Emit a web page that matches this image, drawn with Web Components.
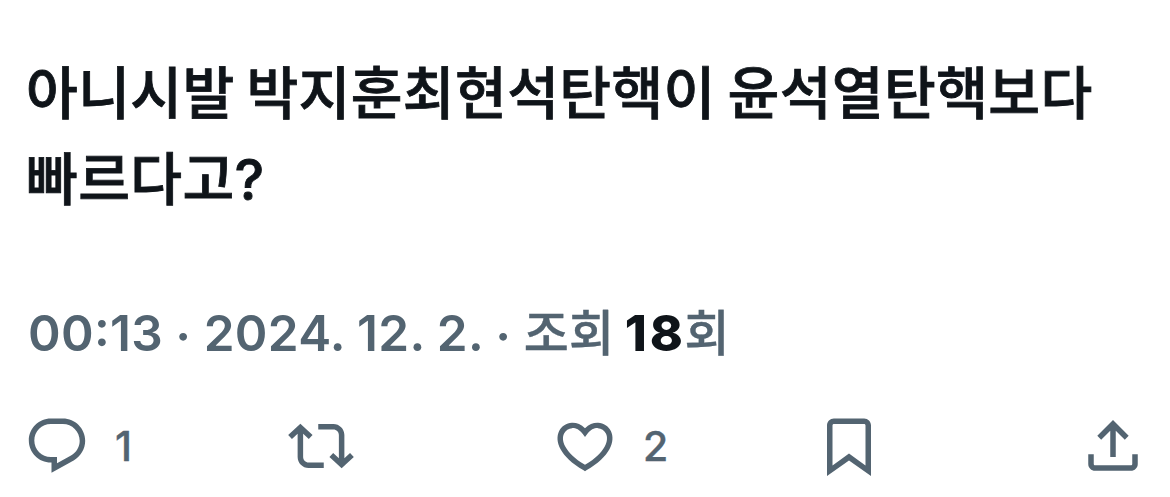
<!DOCTYPE html>
<html lang="ko">
<head>
<meta charset="utf-8">
<title>Post</title>
<style>
  body {
    margin: 0;
    background: #fff;
    font-family: Inter, "Noto Sans CJK KR", sans-serif;
  }
</style>
</head>
<body>
<post-detail>
  <post-text slot="text"><span>아니시발 박지훈최현석탄핵이 윤석열탄핵보다</span><span slot="next">빠르다고?</span></post-text>
  <post-meta slot="meta" views="18"><span slot="time">00:13</span><span slot="date">2024. 12. 2.</span></post-meta>
  <post-action slot="actions" icon="reply" count="1"></post-action>
  <post-action slot="actions" icon="repost"></post-action>
  <post-action slot="actions" icon="like" count="2"></post-action>
  <post-action slot="actions" icon="bookmark"></post-action>
  <post-action slot="actions" icon="share"></post-action>
</post-detail>
<script>
const icons = {
  reply: 'M1.751 10c0-4.42 3.584-8 8.005-8h4.366c4.49 0 8.129 3.64 8.129 8.13 0 2.96-1.607 5.68-4.196 7.11l-8.054 4.46v-3.69h-.067c-4.49.1-8.183-3.51-8.183-8.01zm8.005-6c-3.317 0-6.005 2.69-6.005 6 0 3.37 2.77 6.08 6.138 6.01l.351-.01h1.761v2.3l5.087-2.81c1.951-1.08 3.163-3.13 3.163-5.36 0-3.39-2.744-6.13-6.129-6.13H9.756z',
  repost: 'M4.5 3.88l4.432 4.14-1.364 1.46L5.5 7.55V16c0 1.1.896 2 2 2H13v2H7.5c-2.209 0-4-1.79-4-4V7.55L1.432 9.48.068 8.02 4.5 3.88zM16.5 6H11V4h5.5c2.209 0 4 1.79 4 4v8.45l2.068-1.93 1.364 1.46-4.432 4.14-4.432-4.14 1.364-1.46 2.068 1.93V8c0-1.1-.896-2-2-2z',
  like: 'M16.697 5.5c-1.222-.06-2.679.51-3.89 2.16l-.805 1.09-.806-1.09C9.984 6.01 8.526 5.44 7.304 5.5c-1.243.07-2.349.78-2.91 1.91-.552 1.12-.633 2.78.479 4.82 1.074 1.97 3.257 4.27 7.129 6.61 3.87-2.34 6.052-4.64 7.126-6.61 1.111-2.04 1.03-3.7.477-4.82-.561-1.13-1.666-1.84-2.908-1.91zm4.187 7.69c-1.351 2.48-4.001 5.12-8.379 7.67l-.503.3-.504-.3c-4.379-2.55-7.029-5.19-8.382-7.67-1.36-2.5-1.41-4.86-.514-6.67.887-1.79 2.647-2.91 4.601-3.01 1.651-.09 3.368.56 4.798 2.01 1.429-1.45 3.146-2.1 4.796-2.01 1.954.1 3.714 1.22 4.601 3.01.896 1.81.846 4.17-.514 6.67z',
  bookmark: 'M4 4.5C4 3.12 5.119 2 6.5 2h11C18.881 2 20 3.12 20 4.5v18.44l-8-5.71-8 5.71V4.5zM6.5 4c-.276 0-.5.22-.5.5v14.56l6-4.29 6 4.29V4.5c0-.28-.224-.5-.5-.5h-11z',
  share: 'M12 2.59l5.7 5.7-1.41 1.42L13 6.41V16h-2V6.41l-3.3 3.3-1.41-1.42L12 2.59zM21 15v3.5c0 1.38-1.12 2.5-2.5 2.5h-13C4.11 21 3 19.88 3 18.5V15h2v3.5c0 .28.22.5.5.5h13c.28 0 .5-.22.5-.5V15h2z'
}

class PostDetail extends HTMLElement {
  constructor() {
    super()
    this.attachShadow({mode: 'open'})
    this.shadowRoot.innerHTML = `
<style>
  :host {
    display: block;
    box-sizing: border-box;
    height: 497px;
    padding: 51px 24px 0;
    overflow: hidden;
  }
  .text { padding-left: 2px; }
  .meta {
    margin-top: 78px;
    padding-left: 4px;
  }
  .actions {
    display: grid;
    grid-template-columns: repeat(4, 264px) 66px;
    margin-top: 48px;
  }
</style>
<div class="text"><slot name="text"></slot></div>
<div class="meta"><slot name="meta"></slot></div>
<div class="actions"><slot name="actions"></slot></div>
`
  }
}

class PostText extends HTMLElement {
  constructor() {
    super()
    this.attachShadow({mode: 'open'})
    this.shadowRoot.innerHTML = `
<style>
  :host {
    display: block;
    color: #0f1419;
    font-size: 56.3px;
    line-height: 86px;
    font-weight: 500;
    letter-spacing: .35px;
    word-spacing: -3.5px;
    white-space: nowrap;
    -webkit-text-stroke: .8px currentColor;
  }
  div { height: 86px; }
</style>
<div><slot></slot></div>
<div><slot name="next"></slot></div>
`
  }
}

class PostMeta extends HTMLElement {
  constructor() {
    super()
    this.attachShadow({mode: 'open'})
    this.shadowRoot.innerHTML = `
<style>
  :host {
    display: block;
    height: 64px;
    color: #536471;
    font-size: 49.5px;
    line-height: 64px;
    font-weight: 600;
    letter-spacing: .3px;
    word-spacing: -.5px;
    white-space: nowrap;
  }
  slot[name="time"] { font-feature-settings: "case"; }
  .dot {
    line-height: 0;
    vertical-align: -3px;
  }
  .unit {
    font-size: 49px;
    font-weight: 500;
    -webkit-text-stroke: .4px currentColor;
  }
  b {
    margin: 0 -1.5px 0 -2px;
    color: #0f1419;
    font-size: 50px;
    line-height: 0;
    font-weight: 850;
    letter-spacing: 3px;
  }
</style>
<slot name="time"></slot> <span class="dot">·</span> <slot name="date"></slot> <span class="dot">·</span> <span class="unit">조회</span> <b></b><span class="unit">회</span>
`
    this.shadowRoot.querySelector('b').textContent = this.getAttribute('views')
  }
}

class PostAction extends HTMLElement {
  constructor() {
    super()
    this.attachShadow({mode: 'open'})
    this.shadowRoot.innerHTML = `
<style>
  :host {
    display: flex;
    align-items: center;
    gap: 25px;
    height: 66px;
    color: #536471;
    font-size: 41px;
    font-weight: 500;
    -webkit-text-stroke: .4px currentColor;
  }
  svg {
    flex: none;
    width: 66px;
    height: 66px;
    fill: currentColor;
  }
</style>
<svg viewBox="0 0 24 24"><path d="${icons[this.getAttribute('icon')]}"/></svg>
<span></span>
`
    this.shadowRoot.querySelector('span').textContent = this.getAttribute('count') || ''
  }
}

customElements.define('post-detail', PostDetail)
customElements.define('post-text', PostText)
customElements.define('post-meta', PostMeta)
customElements.define('post-action', PostAction)
</script>
</body>
</html>
